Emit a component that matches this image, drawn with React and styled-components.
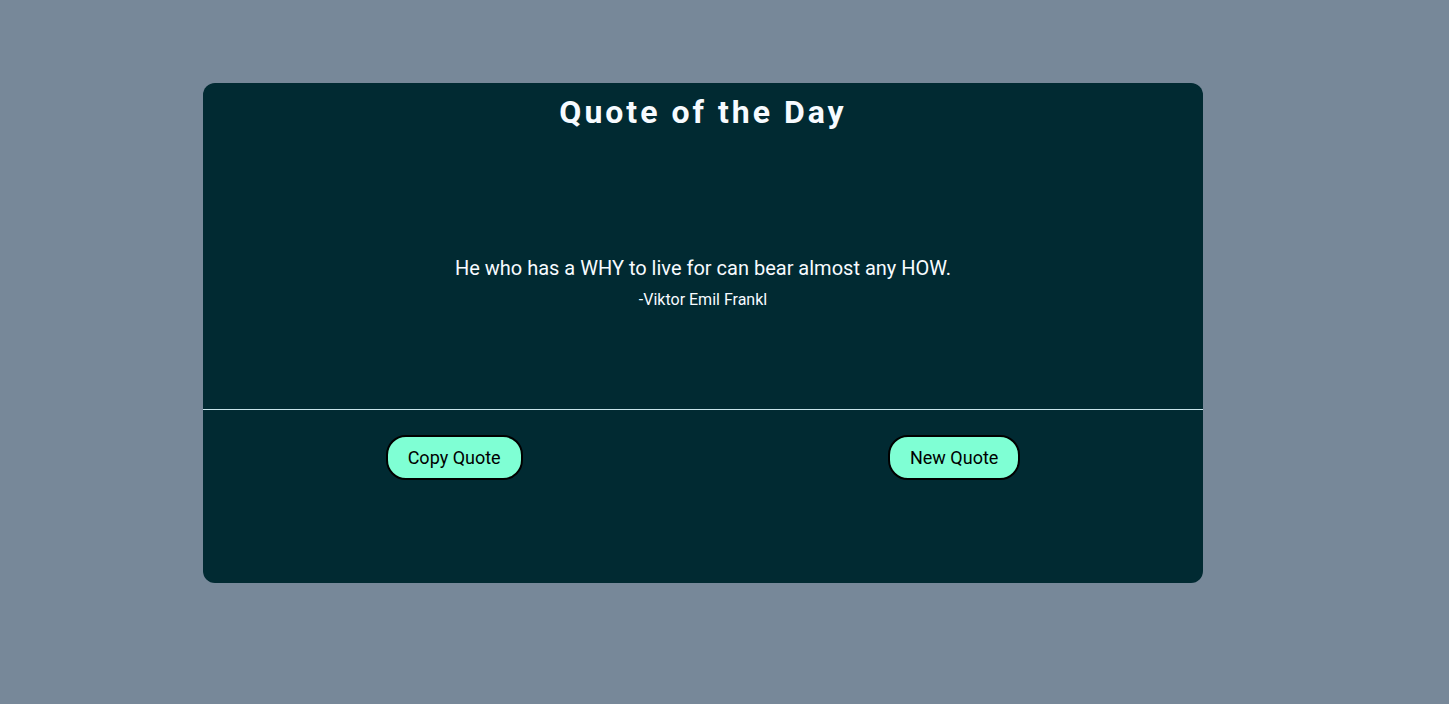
import React from 'react';
import styled, { createGlobalStyle } from 'styled-components';

const GlobalStyle = createGlobalStyle`
  html, body {
    margin: 0;
    padding: 0;
    background: #778899;
    font-family: Roboto, "Liberation Sans", sans-serif;
  }
`;

const Page = styled.main`
  display: flex;
  justify-content: flex-start;
  padding: 83px 0 0 203px;
  min-height: 704px;
  box-sizing: border-box;
`;

const Card = styled.section`
  width: 1000px;
  height: 500px;
  box-sizing: border-box;
  padding-top: 10px;
  background: #012a32;
  border-radius: 12px;
  display: flex;
  flex-direction: column;
  color: #f7fbff;
`;

const Title = styled.h1`
  margin: 0;
  text-align: center;
  font-size: 32px;
  font-weight: 700;
  letter-spacing: 3px;
  line-height: normal;
`;

const QuoteArea = styled.div`
  height: 279px;
  box-sizing: border-box;
  padding-top: 125px;
  border-bottom: 1px solid #c8e4ea;
  text-align: center;
`;

const QuoteText = styled.p`
  margin: 0 0 10px;
  font-size: 20px;
  line-height: normal;
`;

const Author = styled.p`
  margin: 0;
  font-size: 16px;
  line-height: normal;
`;

const Actions = styled.div`
  display: flex;
  justify-content: space-around;
  align-items: flex-start;
  padding-top: 25px;
`;

const Button = styled.button`
  font-family: Roboto, "Liberation Sans", sans-serif;
  font-size: 18px;
  font-weight: 400;
  color: #000;
  background: #7fffd4;
  border: 2px solid #000;
  border-radius: 20px;
  height: 45px;
  padding: 0 20px;
  cursor: pointer;
`;

export default function App() {
  return (
    <>
      <GlobalStyle />
      <Page>
        <Card>
          <Title>Quote of the Day</Title>
          <QuoteArea>
            <QuoteText>He who has a WHY to live for can bear almost any HOW.</QuoteText>
            <Author>-Viktor Emil Frankl</Author>
          </QuoteArea>
          <Actions>
            <Button>Copy Quote</Button>
            <Button>New Quote</Button>
          </Actions>
        </Card>
      </Page>
    </>
  );
}
